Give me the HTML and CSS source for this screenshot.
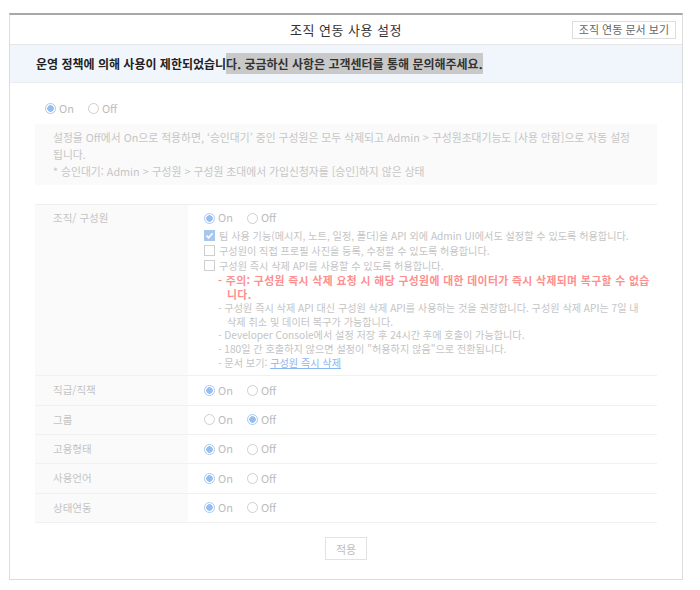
FILE: index.html
```html
<!DOCTYPE html>
<html lang="ko">
<head>
    <meta charset="UTF-8">
    <title>조직 연동 사용 설정</title>
    <link rel="stylesheet" href="styles.css">
</head>
<body>
    <div class="frame">
        <div class="header">
            <span></span>
            <h1 class="title">조직 연동 사용 설정</h1>
            <button class="doc-button">조직 연동 문서 보기</button>
        </div>

        <div class="notice">
            운영 정책에 의해 사용이 제한되었습니<span class="selected">다. 궁금하신 사항은 고객센터를 통해 문의해주세요.</span>
        </div>

        <div class="content">
            <div class="radio-group main-toggle">
                <label class="radio"><span class="dot checked"></span>On</label>
                <label class="radio"><span class="dot"></span>Off</label>
            </div>

            <div class="info-box">
                <p>설정을 Off에서 On으로 적용하면, ‘승인대기’ 중인 구성원은 모두 삭제되고 Admin &gt; 구성원초대기능도 [사용 안함]으로 자동 설정 됩니다.</p>
                <p>* 승인대기: Admin &gt; 구성원 &gt; 구성원 초대에서 가입신청자를 [승인]하지 않은 상태</p>
            </div>

            <div class="settings">
                <div class="row first">
                    <div class="label">조직/ 구성원</div>
                    <div class="value">
                        <div class="radio-group">
                            <label class="radio"><span class="dot checked"></span>On</label>
                            <label class="radio"><span class="dot"></span>Off</label>
                        </div>
                        <label class="check"><span class="box checked">
                            <svg width="9" height="9" viewBox="0 0 9 9"><path d="M1.5 4.6 L3.6 6.8 L7.6 2.2" fill="none" stroke="#fff" stroke-width="1.6"/></svg>
                        </span>팀 사용 기능(메시지, 노트, 일정, 폴더)을 API 외에 Admin UI에서도 설정할 수 있도록 허용합니다.</label>
                        <label class="check"><span class="box"></span>구성원이 직접 프로필 사진을 등록, 수정할 수 있도록 허용합니다.</label>
                        <label class="check"><span class="box"></span>구성원 즉시 삭제 API를 사용할 수 있도록 허용합니다.</label>
                        <ul class="notes">
                            <li class="warn">주의: 구성원 즉시 삭제 요청 시 해당 구성원에 대한 데이터가 즉시 삭제되며 복구할 수 없습니다.</li>
                            <li>구성원 즉시 삭제 API 대신 구성원 삭제 API를 사용하는 것을 권장합니다. 구성원 삭제 API는 7일 내 삭제 취소 및 데이터 복구가 가능합니다.</li>
                            <li>Developer Console에서 설정 저장 후 24시간 후에 호출이 가능합니다.</li>
                            <li>180일 간 호출하지 않으면 설정이 "허용하지 않음"으로 전환됩니다.</li>
                            <li>문서 보기: <a href="#" class="doc-link">구성원 즉시 삭제</a></li>
                        </ul>
                    </div>
                </div>
                <div class="row">
                    <div class="label">직급/직책</div>
                    <div class="value">
                        <div class="radio-group">
                            <label class="radio"><span class="dot checked"></span>On</label>
                            <label class="radio"><span class="dot"></span>Off</label>
                        </div>
                    </div>
                </div>
                <div class="row">
                    <div class="label">그룹</div>
                    <div class="value">
                        <div class="radio-group">
                            <label class="radio"><span class="dot"></span>On</label>
                            <label class="radio"><span class="dot checked"></span>Off</label>
                        </div>
                    </div>
                </div>
                <div class="row">
                    <div class="label">고용형태</div>
                    <div class="value">
                        <div class="radio-group">
                            <label class="radio"><span class="dot checked"></span>On</label>
                            <label class="radio"><span class="dot"></span>Off</label>
                        </div>
                    </div>
                </div>
                <div class="row">
                    <div class="label">사용언어</div>
                    <div class="value">
                        <div class="radio-group">
                            <label class="radio"><span class="dot checked"></span>On</label>
                            <label class="radio"><span class="dot"></span>Off</label>
                        </div>
                    </div>
                </div>
                <div class="row">
                    <div class="label">상태연동</div>
                    <div class="value">
                        <div class="radio-group">
                            <label class="radio"><span class="dot checked"></span>On</label>
                            <label class="radio"><span class="dot"></span>Off</label>
                        </div>
                    </div>
                </div>
            </div>

            <div class="actions">
                <button class="apply-button">적용</button>
            </div>
        </div>
    </div>
</body>
</html>
```

FILE: styles.css
```css
body {
    margin: 0;
    background-color: #fff;
    font-family: "Noto Sans CJK KR", "Noto Sans", sans-serif;
    font-size: 11px;
    color: #333;
}
.frame {
    width: 672px;
    margin: 13px 0 0 9px;
    border: 1px solid #dcdcdc;
    border-top: 2px solid #a8a8a8;
}
.header {
    display: grid;
    grid-template-columns: 1fr auto 1fr;
    align-items: center;
    height: 29px;
    border-bottom: 1px solid #e6e6e6;
}
.title {
    margin: 0;
    font-size: 13px;
    font-weight: normal;
    color: #333;
    letter-spacing: 0.5px;
}
.doc-button {
    justify-self: end;
    margin-right: 6px;
    height: 18px;
    padding: 0 6px;
    border: 1px solid #ddd;
    background-color: #fff;
    font-family: inherit;
    font-size: 11px;
    color: #666;
    line-height: 15px;
}
.notice {
    height: 37px;
    line-height: 37px;
    padding-left: 26px;
    background-color: #f1f6fd;
    border-bottom: 1px solid #e9eef4;
    font-size: 12px;
    font-weight: bold;
    color: #222;
}
.selected {
    background-color: #c9c9c9;
    padding: 2px 0;
    color: #333;
}
.content {
    padding: 17px 25px 19px 25px;
}
.radio-group {
    display: flex;
    gap: 14px;
    height: 16px;
    align-items: center;
}
.main-toggle {
    padding-left: 10px;
}
.radio {
    display: flex;
    align-items: center;
    gap: 3px;
    color: #bcbcbc;
    font-size: 11px;
}
.dot {
    box-sizing: border-box;
    width: 11px;
    height: 11px;
    border: 1px solid #cfcfcf;
    border-radius: 50%;
    background-color: #fff;
}
.dot.checked {
    border-color: #a9c9f2;
    background: radial-gradient(circle, #95bdf0 0 3px, #fff 3.5px);
}
.info-box {
    margin-top: 8px;
    padding: 5px 18px 5px 18px;
    background-color: #fafafa;
    color: #c6c6c6;
    font-size: 10.8px;
    line-height: 17px;
}
.info-box p {
    margin: 0;
}
.settings {
    margin-top: 19px;
    border-top: 1px solid #efefef;
}
.row {
    display: flex;
    border-bottom: 1px solid #f1f1f1;
}
.label {
    width: 135px;
    padding: 6.2px 0 6.2px 18px;
    background-color: #fafafa;
    color: #c4c4c4;
    font-size: 10.5px;
    line-height: 16px;
}
.value {
    flex: 1;
    padding: 6.2px 0 6.2px 16px;
    color: #c4c4c4;
    font-size: 10.15px;
    line-height: 13.6px;
}
.row.first .label,
.row.first .value {
    padding-top: 5px;
    padding-bottom: 6px;
}
.row.first .radio-group {
    margin-bottom: 2px;
}
.check {
    display: flex;
    align-items: center;
    gap: 4px;
    line-height: 15px;
}
.box {
    box-sizing: border-box;
    display: flex;
    align-items: center;
    justify-content: center;
    width: 11px;
    height: 11px;
    border: 1px solid #cfcfcf;
    background-color: #fff;
}
.box.checked {
    border-color: #a6c7f0;
    background-color: #a6c7f0;
}
.notes {
    margin: 1px 0 0 0;
    padding: 0 0 0 14px;
    list-style: none;
    word-break: keep-all;
}
.notes li {
    padding-left: 9px;
    text-indent: -9px;
}
.notes li::before {
    content: "- ";
}
.notes .warn {
    color: #ff8e8e;
    font-weight: bold;
    font-size: 10.8px;
    letter-spacing: 0.4px;
    word-break: normal;
}
.doc-link {
    color: #8db6ee;
}
.actions {
    display: flex;
    justify-content: center;
    margin-top: 14px;
}
.apply-button {
    height: 23px;
    padding: 0 10px;
    border: 1px solid #e2e2e2;
    background-color: #fff;
    font-family: inherit;
    font-size: 11px;
    color: #bdbdbd;
}
```
